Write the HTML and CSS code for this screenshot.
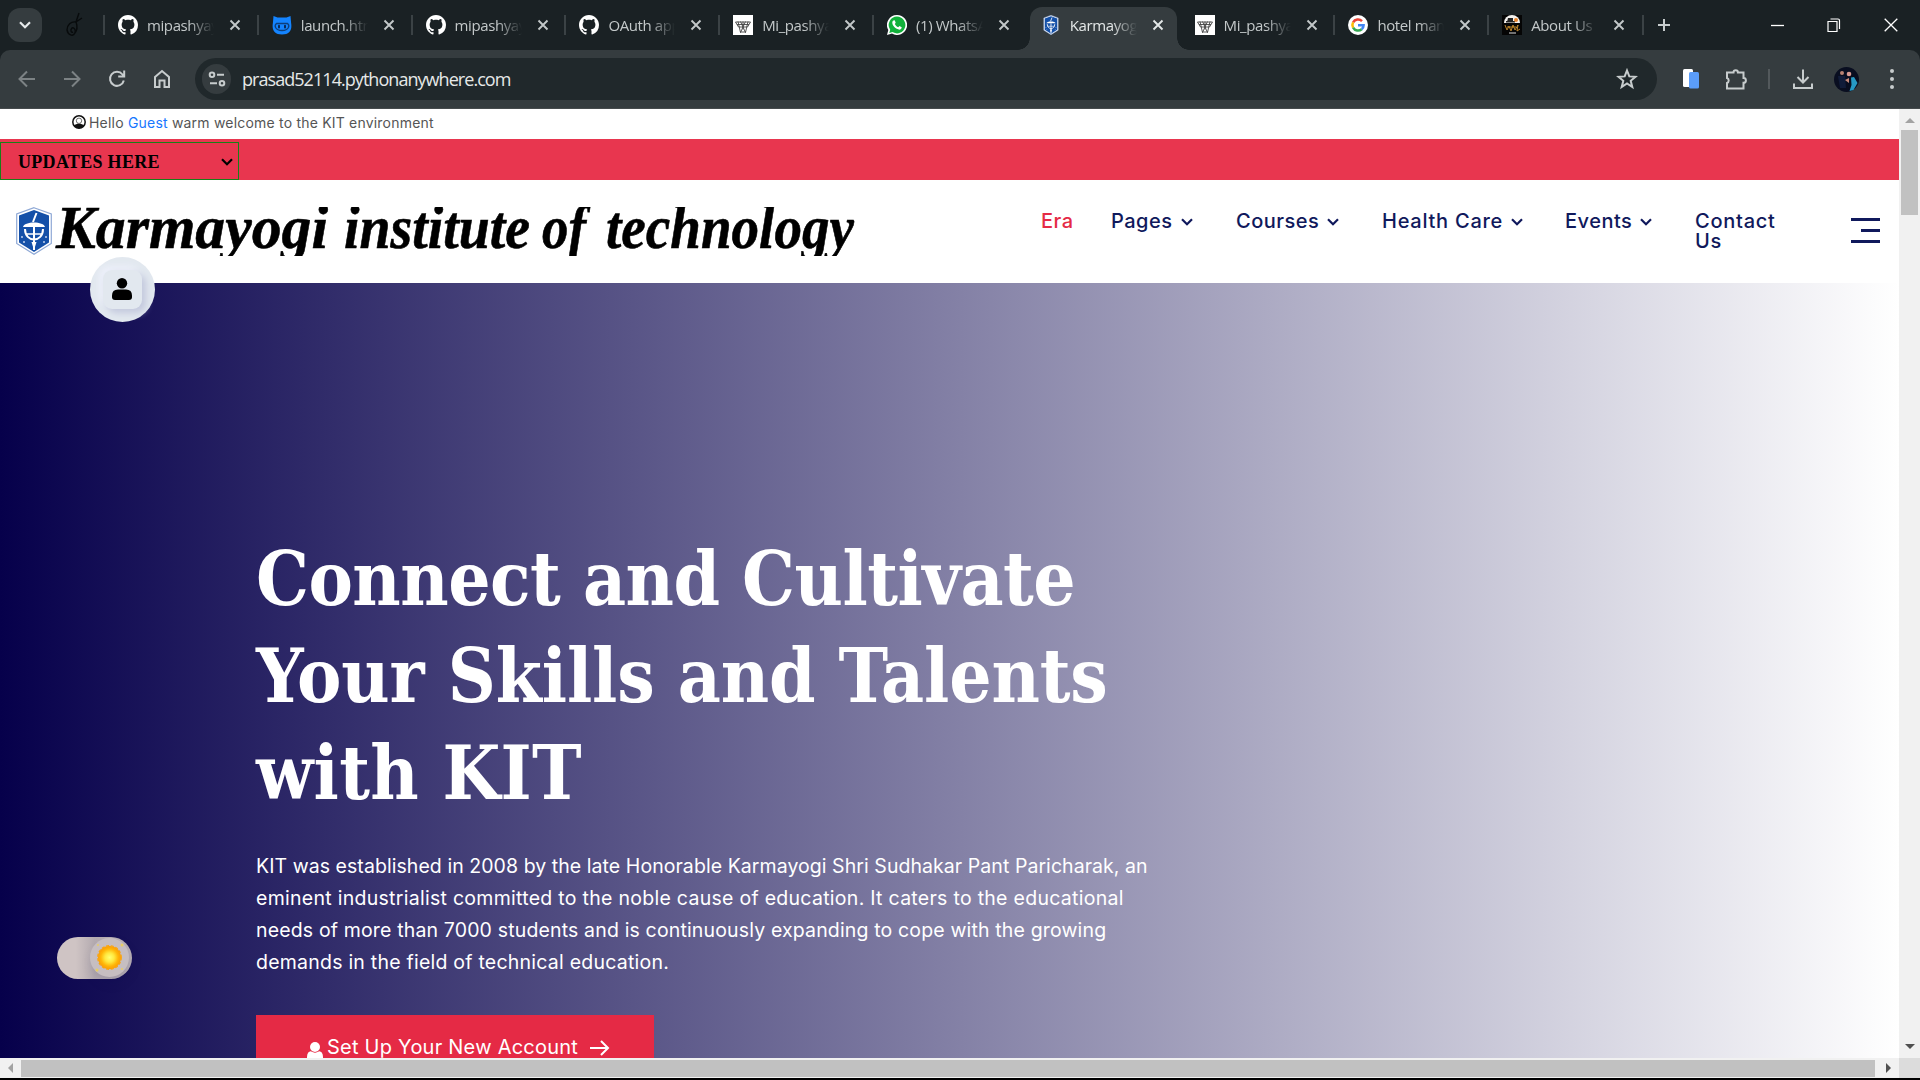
FILE: index.html
```html
<!DOCTYPE html>
<html lang="en">
<head>
<meta charset="utf-8">
<title>Karmayogi institute of technology</title>
<link rel="stylesheet" href="styles.css">
</head>
<body>
<svg class="defs" width="0" height="0">
  <symbol id="github" viewBox="0 0 16 16"><path fill="#fff" d="M8 0C3.58 0 0 3.58 0 8c0 3.54 2.29 6.53 5.47 7.59.4.07.55-.17.55-.38 0-.19-.01-.82-.01-1.49-2.01.37-2.53-.49-2.69-.94-.09-.23-.48-.94-.82-1.13-.28-.15-.68-.52-.01-.53.63-.01 1.08.58 1.23.82.72 1.21 1.87.87 2.33.66.07-.52.28-.87.51-1.07-1.78-.2-3.64-.89-3.64-3.95 0-.87.31-1.59.82-2.15-.08-.2-.36-1.02.08-2.12 0 0 .67-.21 2.2.82.64-.18 1.32-.27 2-.27s1.36.09 2 .27c1.53-1.04 2.2-.82 2.2-.82.44 1.1.16 1.92.08 2.12.51.56.82 1.27.82 2.15 0 3.07-1.87 3.75-3.65 3.95.29.25.54.73.54 1.48 0 1.07-.01 1.93-.01 2.2 0 .21.15.46.55.38A8.01 8.01 0 0 0 16 8c0-4.42-3.58-8-8-8z"/></symbol>
  <symbol id="x" viewBox="0 0 12 12"><path d="M1.500 1.500l9 9M10.500 1.500l-9 9" stroke="currentColor" stroke-width="1.900" fill="none"/></symbol>
  <symbol id="mesh" viewBox="0 0 20 20"><path fill="#fff" d="M0 0h20v20H0z"/><path d="M2.500 7h15M4 9.500h12M5.500 12h9M5 6.500l2.500 11 5-11M15 6.500l-2.500 11-5-11M2.500 7l3 5M17.500 7l-3 5M7 17h6M10 6.500v8" stroke="#444" stroke-width=".9" fill="none"/></symbol>
  <symbol id="crest" viewBox="0 0 36 48"><path d="M18 .7L35.300 7v29.500L18 47.300.7 36.500V7z" fill="#fff" stroke="#8fa9d6" stroke-width="1.200"/><path d="M18 3l15 5.500v27L18 45 3 35.500v-27z" fill="#1450a8"/><path d="M17 15l3.500-9M18 20v23M9 22c0 14 18 14 18 0" stroke="#fff" stroke-width="2" fill="none"/><path d="M7 20c1-6 21-6 22 0zM15.500 35L18 43l2.500-8z" fill="#fff"/><path d="M10 27h16" stroke="#fff" stroke-width="1.500"/><g fill="#bfd0ee"><circle cx="6" cy="30" r="1"/><circle cx="30" cy="30" r="1"/><circle cx="8" cy="35" r="1"/><circle cx="28" cy="35" r="1"/></g></symbol>
  <symbol id="chev" viewBox="0 0 12 8"><path d="M1 1.200l5 5 5-5" stroke="currentColor" stroke-width="2.200" fill="none"/></symbol>
</svg>

<div class="browser">
  <div class="tabstrip">
    <div class="tabsearch"><svg width="12" height="8"><use href="#chev"/></svg></div>
    <div class="pinned"><svg width="18" height="26" viewBox="0 0 18 26"><path d="M14 1l-3 9M17 6l-6 4M11 10c-5-1-9 3-9 8 1 5 6 7 8 3 1-3-1-6-3-5-2 2-1 5 1 4M11 10c2 5 1 9-2 12" stroke="#080b0c" stroke-width="1.400" fill="none"/></svg></div>
    <div class="tab"><svg class="fav"><use href="#github"/></svg><span>mipashyayi</span><svg class="close"><use href="#x"/></svg></div>
    <div class="tab"><svg class="fav" viewBox="0 0 20 20"><path d="M1.500 1l4 1.500h9l4-1.500.6 7c1.200 7-1.500 11.500-9.100 11.500S-.3 15 .9 8z" fill="#1484ff"/><path d="M4.500 8.500h11c2.500 2 1.500 7-5.500 7s-8-5-5.500-7z" fill="none" stroke="#0d3f7c" stroke-width="1.300"/><rect x="6" y="9.800" width="2" height="3.600" rx="1" fill="#0b2a55"/><rect x="12" y="9.800" width="2" height="3.600" rx="1" fill="#0b2a55"/></svg><span>launch.html</span><svg class="close"><use href="#x"/></svg></div>
    <div class="tab"><svg class="fav"><use href="#github"/></svg><span>mipashyayi</span><svg class="close"><use href="#x"/></svg></div>
    <div class="tab"><svg class="fav"><use href="#github"/></svg><span>OAuth appl</span><svg class="close"><use href="#x"/></svg></div>
    <div class="tab"><svg class="fav"><use href="#mesh"/></svg><span>Mi_pashyayi</span><svg class="close"><use href="#x"/></svg></div>
    <div class="tab"><svg class="fav" viewBox="0 0 20 20"><path d="M10 0a10 10 0 1 1-5 18.600L0 20l1.300-5A10 10 0 0 1 10 0z" fill="#fff"/><path d="M10 1.600a8.400 8.400 0 1 1-4.500 15.500L2.300 18l.9-3.200A8.400 8.400 0 0 1 10 1.600z" fill="#12b13b"/><path d="M6.500 5.500l1.200-.2 1 2.500-.9 1.300c.8 1.600 1.900 2.500 3.400 3.200l1.300-1.200 2.200 1.200c0 1.800-1.500 2.500-2.900 2.300-3.600-.7-6.600-4.200-6.500-7 0-1 .5-1.700 1.200-2.100z" fill="#fff"/></svg><span>(1) WhatsApp</span><svg class="close"><use href="#x"/></svg></div>
    <div class="tab active"><svg class="fav"><use href="#crest"/></svg><span>Karmayogi</span><svg class="close"><use href="#x"/></svg></div>
    <div class="tab"><svg class="fav"><use href="#mesh"/></svg><span>Mi_pashyayi</span><svg class="close"><use href="#x"/></svg></div>
    <div class="tab"><svg class="fav" viewBox="0 0 20 20"><circle cx="10" cy="10" r="10" fill="#fff"/><g fill="none" stroke-width="2.500"><path d="M14 6.100A5.600 5.600 0 0 0 5.100 7.300" stroke="#ea4335"/><path d="M5.100 7.300a5.600 5.600 0 0 0 0 5.400" stroke="#fbbc05"/><path d="M5.100 12.700a5.600 5.600 0 0 0 8.600 1.500" stroke="#34a853"/><path d="M13.700 14.200c1.300-1.100 1.900-2.500 1.900-3.900H10" stroke="#4285f4"/></g></svg><span>hotel mana</span><svg class="close"><use href="#x"/></svg></div>
    <div class="tab"><svg class="fav" viewBox="0 0 20 20"><path d="M0 0h20v20H0z" fill="#050505"/><path d="M2 8a8 8 0 0 1 16 0z" fill="#f4f2ef"/><path d="M6 3h5v4H5zM4 6h9v1.500H4z" fill="#222"/><circle cx="14" cy="5" r="2" fill="#e8832a"/><path d="M3 10l2 5 2-4 2 5 2-6 2 5 3-5-1 6 3-2M5 12h9" stroke="#b9832b" stroke-width="1" fill="none"/><path d="M7 18h7" stroke="#ddd"/></svg><span>About Us</span><svg class="close"><use href="#x"/></svg></div>
    <div class="newtab"><svg width="14" height="14" viewBox="0 0 14 14"><path d="M7 1v12M1 7h12" stroke="#c7cccd" stroke-width="2"/></svg></div>
    <div class="winctl">
      <svg width="14" height="14" viewBox="0 0 14 14"><path d="M1 7.500h13" stroke="#fff" stroke-width="1.300"/></svg>
      <svg width="14" height="14" viewBox="0 0 14 14"><path d="M1 3.500h9v10H1zM3.500 1H11q1.500 0 1.500 1.500V11" stroke="#fff" stroke-width="1.200" fill="none"/></svg>
      <svg width="14" height="14" viewBox="0 0 14 14"><path d="M.7.7l12.600 12.600M13.300.7L.7 13.300" stroke="#fff" stroke-width="1.300"/></svg>
    </div>
  </div>
  <div class="toolbar">
    <div class="navbtns">
      <svg class="dim" width="20" height="20" viewBox="0 0 20 20"><path d="M18 10H3M10 2.500L2.500 10l7.500 7.500"/></svg>
      <svg class="dim" width="20" height="20" viewBox="0 0 20 20"><path d="M2 10h15M10 2.500l7.500 7.500-7.500 7.500"/></svg>
      <svg width="20" height="20" viewBox="0 0 20 20"><path d="M16.800 11.500A7 7 0 1 1 15.500 5.500L17 7.500M17.200 1.500v6h-6"/></svg>
      <svg width="20" height="20" viewBox="0 0 20 20"><path d="M3 8l7-6 7 6v10h-4.500v-6.500h-5V18H3z"/></svg>
    </div>
    <div class="omnibox">
      <div class="site"><svg width="18" height="16" viewBox="0 0 18 16"><path d="M9 3.800h7M2 12.200h7"/><circle cx="4" cy="3.800" r="2.300"/><circle cx="14" cy="12.200" r="2.300"/></svg></div>
      <span class="url">prasad52114.pythonanywhere.com</span>
      <svg class="star" width="22" height="22" viewBox="0 0 22 22"><path d="M11 2.500l2.300 5.900 6.200.4-4.800 4 1.600 6.200-5.300-3.500L5.700 19l1.600-6.200-4.800-4 6.200-.4z"/></svg>
    </div>
    <div class="exts">
      <svg class="solid" width="16" height="20" viewBox="0 0 16 20"><rect width="10" height="18" rx="1.500" fill="#fff"/><rect x="6" y="3" width="10" height="16.500" rx="1.500" fill="#5b9df9"/></svg>
      <svg width="24" height="24" viewBox="0 0 24 24"><path d="M3 5.500h6.500a2.200 2.200 0 0 1 4.400 0h5.600v5.500a2.400 2.400 0 0 1 0 4.800v5.700H3v-5.500a2.700 2.700 0 0 0 0-5z"/></svg>
      <i class="divider"></i>
      <svg width="22" height="22" viewBox="0 0 22 22"><path d="M11 1.500v12M5.500 9l5.500 5.500L16.500 9M2 15.500V20h18v-4.500"/></svg>
      <svg class="me solid" width="25" height="25" viewBox="0 0 25 25"><circle cx="12.500" cy="12.500" r="12.500" fill="#090e20"/><circle cx="8" cy="6" r="2" fill="#b98272"/><circle cx="15" cy="7" r="2.300" fill="#d79a91"/><path d="M4 9h7l1 12H6z" fill="#111c39"/><path d="M17 10.500l3-.5 3.500 6-4 7-4 1 2-6z" fill="#2699c4"/><path d="M11 13l4-2v5z" fill="#c88b7b"/></svg>
      <svg class="solid" width="6" height="22" viewBox="0 0 6 22"><g fill="#c7cccd"><circle cx="3" cy="3" r="2"/><circle cx="3" cy="11" r="2"/><circle cx="3" cy="19" r="2"/></g></svg>
    </div>
  </div>

  <div class="viewport">
    <main class="page">
      <div class="hello">
        <svg width="14" height="14" viewBox="0 0 14 14"><circle cx="7" cy="7" r="6.200" fill="#fff" stroke="#111" stroke-width="1.500"/><path d="M2 10.500C4 8.200 10 8.200 12 10.500 10 14 4 14 2 10.500z" fill="#111"/><circle cx="7" cy="5.800" r="2.700" fill="#fff" stroke="#111" stroke-width=".6"/></svg>
        <span>Hello <a>Guest</a> warm welcome to the KIT environment</span>
      </div>
      <div class="updates"><div class="select"><span>UPDATES HERE</span><svg width="12" height="8"><use href="#chev"/></svg></div></div>
      <header class="header">
        <svg class="crest" width="36" height="48"><use href="#crest"/></svg>
        <svg class="wordmark" width="806" height="49">
          <text x="4" y="41" textLength="272" lengthAdjust="spacingAndGlyphs">Karmayogi</text>
          <text x="292" y="41" textLength="186" lengthAdjust="spacingAndGlyphs">institute</text>
          <text x="490" y="41" textLength="44" lengthAdjust="spacingAndGlyphs">of</text>
          <text x="554" y="41" textLength="248" lengthAdjust="spacingAndGlyphs">technology</text>
        </svg>
        <nav class="menu">
          <a class="on">Era</a>
          <a>Pages<svg class="chev"><use href="#chev"/></svg></a>
          <a>Courses<svg class="chev"><use href="#chev"/></svg></a>
          <a class="wide">Health Care<svg class="chev"><use href="#chev"/></svg></a>
          <a>Events<svg class="chev"><use href="#chev"/></svg></a>
          <a class="wide">Contact<br>Us</a>
        </nav>
        <div class="burger"><i></i><i class="short"></i><i></i></div>
      </header>
      <section class="hero">
        <h1><span class="l1">Connect and Cultivate</span><span class="l2">Your Skills and Talents</span><span class="l3">with KIT</span></h1>
        <p><span class="p1">KIT was established in 2008 by the late Honorable Karmayogi Shri Sudhakar Pant Paricharak, an</span><span class="p2">eminent industrialist committed to the noble cause of education. It caters to the educational</span><span class="p3">needs of more than 7000 students and is continuously expanding to cope with the growing</span><span class="p4">demands in the field of technical education.</span></p>
        <a class="cta">
          <svg width="16" height="20" viewBox="0 0 16 20"><circle cx="8" cy="5" r="5" fill="#fff"/><path d="M0 20v-5q0-6 5-6h6q5 0 5 6v5z" fill="#fff"/><path d="M4 9q4 3 8 0" stroke="#e52a45" stroke-width=".8" fill="none"/></svg>
          <span>Set Up Your New Account</span>
          <svg class="arrow" width="20" height="16" viewBox="0 0 20 16"><path d="M0 8h18M11 1l7 7-7 7" stroke="#fff" stroke-width="2" fill="none"/></svg>
        </a>
      </section>
      <div class="profile"><div><svg width="20" height="22" viewBox="0 0 20 22"><circle cx="10" cy="5.200" r="5.200"/><path d="M0 19v-1.500Q0 11.500 6 11.500h8q6 0 6 6V19q0 3-3 3H3q-3 0-3-3z"/></svg></div></div>
      <div class="theme"><div><svg width="39" height="39" viewBox="0 0 39 39"><defs><radialGradient id="sun"><stop offset="0" stop-color="#ffff72"/><stop offset=".4" stop-color="#ffe83f"/><stop offset=".75" stop-color="#ffb507"/><stop offset="1" stop-color="#fa9d08"/></radialGradient></defs><circle cx="19.500" cy="19.500" r="11.500" fill="url(#sun)"/><circle cx="19.500" cy="19.500" r="11.800" fill="none" stroke="#fca408" stroke-width="1.200" stroke-dasharray="3 1.710"/><g fill="#e8cd62"><circle cx="32" cy="7" r="1.500"/><circle cx="7" cy="32" r="1.500"/><circle cx="8" cy="7" r="1"/><circle cx="32" cy="31" r="1"/></g></svg></div></div>
    </main>
    <div class="vscroll"><i class="up"></i><b></b><i class="down"></i></div>
    <div class="hscroll"><i class="left"></i><b></b><i class="right"></i></div>
    <div class="corner"></div>
  </div>
</div>
</body>
</html>
```
FILE: styles.css
```css
* { box-sizing: border-box; }
body { margin: 0; background: #000; overflow: hidden; }
svg { display: block; flex: none; }
.defs { position: absolute; }
.browser { width: 1920px; height: 1080px; font-family: "Open Sans", "Noto Sans", sans-serif; background: #1a2124; }

/* tab strip */
.tabstrip { display: flex; height: 50px; align-items: stretch; background: #1a2124; }
.tabsearch { width: 34px; height: 34px; margin: 8px 0 0 8px; border-radius: 12px; background: #353c3f; color: #e6eaeb; display: flex; align-items: center; justify-content: center; }
.pinned { width: 62px; padding: 12px 0 0 23px; }
.tab { width: 153.8px; display: flex; align-items: center; padding: 0 0 0 14px; position: relative; color: #c3c8c9; }
.tab::before { content: ""; position: absolute; left: -1px; top: 15px; width: 2px; height: 20px; background: #3b4245; }
.fav { width: 20px; height: 20px; }
.tab > span { width: 67px; margin-left: 9px; overflow: hidden; white-space: nowrap; font-size: 15px; letter-spacing: -.4px; line-height: 22px; padding-top: 0; -webkit-mask-image: linear-gradient(90deg, #000 62%, transparent); mask-image: linear-gradient(90deg, #000 62%, transparent); }
.close { width: 12px; height: 12px; margin-left: 15px; }
.tab.active { color: #e4e8e8; }
.tab.active::before { left: 3px; top: 7px; width: 147px; height: 43px; border-radius: 12px 12px 0 0; background: #353c3f; }
.tab.active::after { content: ""; position: absolute; left: -9px; bottom: 0; width: 171px; height: 12px; background: radial-gradient(circle at 0 0, transparent 11.5px, #353c3f 12px) 0 0 / 12px 12px no-repeat, radial-gradient(circle at 100% 0, transparent 11.5px, #353c3f 12px) 100% 0 / 12px 12px no-repeat; }
.tab.active > * { position: relative; }
.tab.active + .tab::before { display: none; }
.newtab { border-left: 2px solid #3b4245; width: 34px; height: 20px; margin-top: 15px; padding: 3px 0 0 13px; }
.winctl { display: flex; gap: 43px; margin: 18px 22px 0 auto; }

/* toolbar */
.toolbar { height: 59px; background: #353c3f; border-bottom: 1px solid #464b4d; border-radius: 10px 10px 0 0; display: flex; align-items: center; }
.toolbar svg { fill: none; stroke: #c7cccd; stroke-width: 2; }
.toolbar .solid { stroke: none; }
.navbtns { display: flex; gap: 25px; padding-left: 17px; width: 195px; }
.navbtns .dim { stroke: #7c8284; }
.omnibox { width: 1462px; height: 42px; border-radius: 21px; background: #20282b; display: flex; align-items: center; padding-left: 7px; }
.site { width: 29px; height: 30px; border-radius: 15px; background: #353c3f; display: flex; align-items: center; justify-content: center; }
.url { font-size: 18px; letter-spacing: -.95px; color: #e6e8e8; margin-left: 11px; flex: 1; }
.star { margin-right: 19px; }
.exts { display: flex; align-items: center; flex: 1; padding-left: 26px; }
.exts svg:nth-child(2) { margin-left: 25px; }
.divider { width: 2px; height: 20px; background: #53595c; margin: 0 22px 0 20px; }
.me { margin: 0 30px 0 20px; }

/* page frame */
.viewport { display: grid; grid-template: 949px 20px / 1899px 21px; height: 971px; background: #000; }
.page { position: relative; overflow: hidden; background: #fff; font-family: Inter, "Open Sans", sans-serif; }
.vscroll, .hscroll { background: #f1f1f1; display: flex; align-items: center; }
.vscroll { flex-direction: column; }
.vscroll b { width: 17px; height: 85px; background: #c1c1c1; margin-top: 7px; }
.vscroll i, .hscroll i { border: 5px solid transparent; }
.up { border-top: 0 !important; border-bottom-color: #a3a3a3 !important; margin-top: 9px; }
.down { border-bottom: 0 !important; border-top-color: #505050 !important; margin: auto 0 9px; }
.hscroll b { width: 1854px; height: 17px; background: #c1c1c1; margin-left: 8px; }
.left { border-left: 0 !important; border-right-color: #a3a3a3 !important; margin-left: 8px; }
.right { border-right: 0 !important; border-left-color: #505050 !important; margin-left: 11px; }
.corner { background: #dcdcdc; }

/* greeting and updates */
.hello { height: 30px; display: flex; align-items: center; padding: 0 0 4px 72px; gap: 3px; font-size: 14px; color: #555; letter-spacing: .2px; }
.hello a { color: #1677ff; }
.updates { height: 41px; background: #e8364f; padding-top: 3px; }
.select { width: 239px; height: 38px; border: 1px solid #188018; display: flex; align-items: center; justify-content: space-between; padding: 2px 5px 0 17px; font: bold 18px "Liberation Serif", serif; letter-spacing: .3px; color: #000; }

/* header */
.header { height: 103px; display: flex; align-items: flex-start; }
.header .crest { margin: 27px 0 0 16px; }
.wordmark { margin-top: 27px; overflow: hidden; font: italic bold 61px "Liberation Serif", serif; stroke: #000; stroke-width: .6; }
.menu { display: grid; grid-template-columns: 70px 125px 146px 183px 130px 156px; margin: 31px 0 0 183px; font-size: 20px; font-weight: 500; line-height: 20px; letter-spacing: .5px; color: #10195c; }
.menu .on { color: #e52a45; }
.menu .wide { letter-spacing: .75px; }
.menu a { white-space: nowrap; }
.chev { display: inline-block; width: 12px; height: 8px; margin: 0 0 2px 8px; }
.burger { width: 29px; margin-top: 38px; display: flex; flex-direction: column; align-items: flex-end; gap: 8px; }
.burger i { width: 29px; height: 3px; background: #10195c; }
.burger .short { width: 19px; }

/* hero */
.hero { height: 775px; background: linear-gradient(90deg, #06004b, #fff); color: #fff; padding: 248px 0 0 256px; }
.hero h1 { margin: 0; font-family: "DejaVu Serif Condensed", "DejaVu Serif", serif; font-stretch: condensed; font-size: 74px; font-weight: bold; line-height: 97px; white-space: nowrap; }
.hero h1 span, .hero p span { display: block; }
.l1 { letter-spacing: -.52px; }
.l2 { letter-spacing: -.1px; }
.l3 { letter-spacing: .3px; }
.hero p { margin: 28px 0 0; font-size: 19.500px; line-height: 32px; white-space: nowrap; }
.p1 { letter-spacing: .06px; }
.p2 { letter-spacing: .28px; }
.p3 { letter-spacing: .155px; }
.p4 { letter-spacing: .23px; }
.cta { display: flex; width: 398px; height: 80px; margin-top: 37px; background: #e52a45; padding: 17px 0 0 51px; font-size: 20px; line-height: 30px; letter-spacing: .24px; }
.cta svg { margin-top: 10px; }
.cta span { margin-left: 4px; width: 263px; white-space: nowrap; }
.cta .arrow { margin-top: 8px; }

/* floating controls */
.profile { position: absolute; left: 90px; top: 148px; width: 65px; height: 65px; border-radius: 50%; background: #e2e8ef; padding: 13px 0 0 13px; }
.profile div { width: 39px; height: 39px; border-radius: 9px; background: #e2e8ef; box-shadow: 4px 4px 7px #c3c8dd, -4px -4px 7px #edf0fa; padding: 8px 0 0 9px; }
.theme { position: absolute; left: 57px; top: 828px; width: 75px; height: 42px; border-radius: 21px; background: linear-gradient(90deg, #cfc4c4 25%, #b4abb0 50%, #bdb4b8); }
.theme div { width: 39px; height: 39px; border-radius: 50%; margin: 1px 0 0 33px; background: #c6bec1; box-shadow: 2px 6px 12px #05004a22; }
```
